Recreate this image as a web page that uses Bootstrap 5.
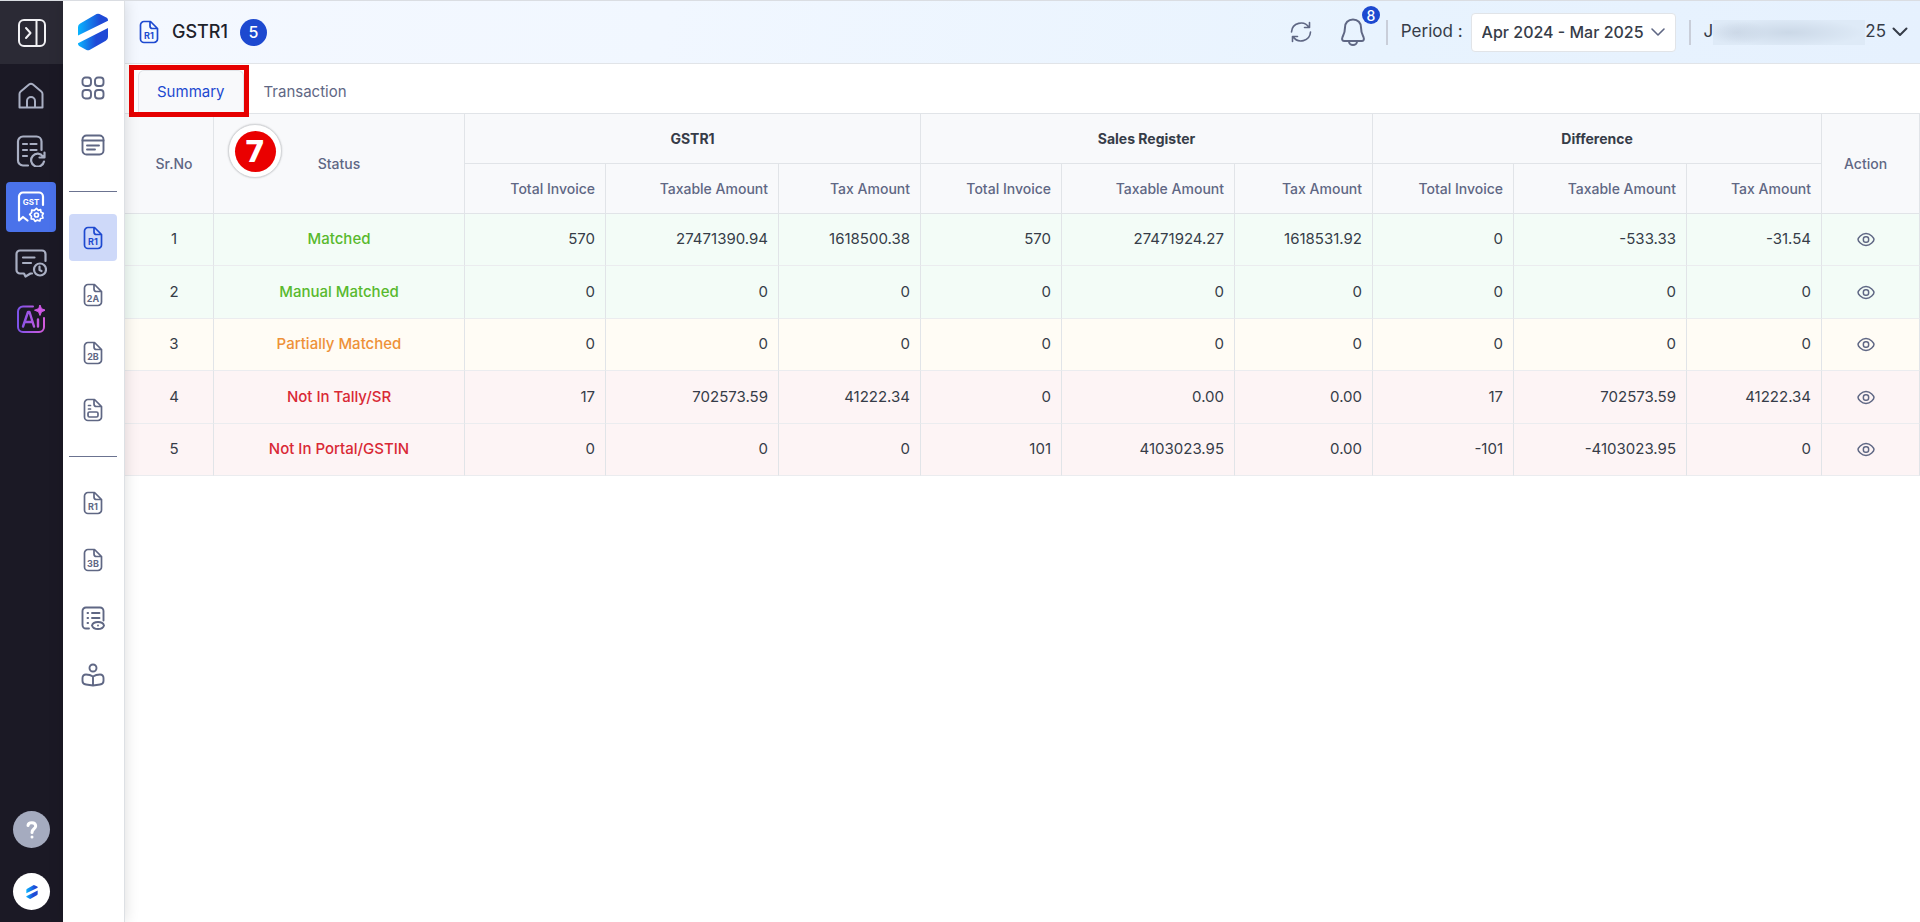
<!DOCTYPE html>
<html lang="en">
<head>
<meta charset="utf-8">
<meta name="viewport" content="width=device-width, initial-scale=1">
<title>GSTR1 Summary</title>
<link href="https://cdn.jsdelivr.net/npm/bootstrap@5.3.0/dist/css/bootstrap.min.css" rel="stylesheet">
<style>
  :root { --ink: #363c48; --muted-ink: #5f6784; --line: #e1e4e8; --brand: #1d49d0; }
  body { font-family: Inter, "Liberation Sans", sans-serif; font-size: 15px; color: var(--ink); border-top: 1px solid #dadde2; }
  svg { display: block; flex-shrink: 0; }
  .shell { min-height: calc(100vh - 1px); }
  .icon-line { fill: none; stroke: currentColor; stroke-linecap: round; stroke-linejoin: round; }
  .svg-label { font-weight: 700; fill: currentColor; stroke: none; text-anchor: middle; }

  /* Main rail */
  .rail { width: 63px; background: #1b1925; color: #a9afc3; }
  .rail-toggle { height: 63px; background: #2b2a35; color: #f1f1f4; }
  .rail-nav { gap: 6px; padding: 6px 1px 0 0; }
  .rail-item { width: 50px; height: 50px; border-radius: 4px; color: inherit; }
  .rail-item.active { background: #4a72ea; color: #fff; }
  .rail-round { width: 37px; height: 37px; }
  .rail-help { background: #a5abbf; }
  .rail-foot { gap: 25px; padding-bottom: 12px; }

  /* Product side menu */
  .side { width: 62px; padding-right: 1px; border-right: 1px solid #dde0e4; box-shadow: 0 0 14px rgba(0, 0, 0, .14); z-index: 2; color: var(--muted-ink); }
  .side-logo { height: 63px; padding-top: 12px; }
  .side-item { width: 48px; height: 47px; margin-bottom: 10px; border-radius: 4px; color: inherit; }
  .side-item:nth-child(even) { margin-bottom: 11px; }
  .side-item.active { background: #ced9f9; color: var(--brand); }
  .side-rule { width: 48px; height: 1px; margin: 12px 0 22px; background: #6b7390; }

  /* Top bar */
  .topbar { height: 63px; padding: 0 12px 0 14px; border-bottom: 1px solid var(--line); background: linear-gradient(100deg, #f4f8ff 0%, #f1f7ff 30%, #e8f3fe 70%, #e6f1fe 100%); }
  .page-title { font-size: 18px; font-weight: 500; color: #1e222b; margin: 0 12px 0 13px; }
  .count-dot { width: 27px; height: 27px; background: var(--brand); font-size: 16px; font-weight: 500; }
  .bar-rule { width: 2px; height: 25px; margin: 0 13px; background: #c9ced9; }
  .bell { margin-right: 7px; }
  .bell-badge { top: -12px; left: 22px; width: 18px; height: 18px; background: var(--brand); font-size: 14px; font-weight: 500; }
  .bar-text { font-size: 17px; color: var(--ink); }
  .period-box { width: 205px; height: 39px; padding: 0 30px 0 10px; font-size: 16px; font-weight: 500; color: var(--ink); border-color: var(--line); border-radius: 4px;
    background-position: right 9px center; background-size: 16px 16px;
    background-image: url("data:image/svg+xml,%3Csvg xmlns='http://www.w3.org/2000/svg' viewBox='0 0 16 16'%3E%3Cpath d='M2 5l6 6 6-6' fill='none' stroke='%235f6784' stroke-width='1.6' stroke-linecap='round' stroke-linejoin='round'/%3E%3C/svg%3E"); }
  .masked-name { width: 152px; height: 25px; background: radial-gradient(ellipse 75px 14px at 50% 50%, #cbd8e7, transparent), radial-gradient(ellipse 30px 12px at 16% 50%, #cdd9e8, transparent), #deeaf7; }
  .company-arrow { margin-left: 6px; }

  /* Tabs */
  .tabs { height: 50px; gap: 1px; padding: 6px 0 0 13px; border-bottom: 1px solid var(--line); }
  .tabs .nav-link { height: 43px; padding: 0 18px; border: 1px solid transparent; border-bottom: 0; border-radius: 6px 6px 0 0; color: var(--muted-ink); background: none; }
  .tabs .nav-link.active { color: var(--brand); background: #f8f9fb; border-color: var(--line); }
  .tab-mark { inset: -5px -5px -4px -9px; z-index: 1; border: 5px solid #e60000; pointer-events: none; }
  .step-mark { top: 10px; left: 14px; width: 54px; height: 54px; background: #fff; border: 1px solid #d5d7da; box-shadow: 0 0 2px rgba(0, 0, 0, .2); }
  .step-mark span { width: 41px; height: 41px; background: #ea0000; font: 700 30px "DejaVu Sans", sans-serif; }

  /* Summary table */
  .summary { table-layout: fixed; border-collapse: separate; border-spacing: 0; }
  .summary th, .summary td { padding: 0 10px; border: 0 solid var(--line); border-right-width: 1px; border-bottom-width: 1px; text-align: right; vertical-align: middle; color: var(--ink); }
  .summary thead th { background: #f8f9fb; font-size: 14px; font-weight: 500; color: var(--muted-ink); height: 50px; }
  .summary thead th.group { font-weight: 700; color: var(--ink); text-align: center; }
  .summary .mid { text-align: center; }
  .summary tr > .first { padding-left: 20px; }
  .summary tr > .last { padding-right: 20px; }
  .summary tbody tr { height: 52px; }
  .summary tbody tr:nth-child(even) { height: 53px; }
  .summary tbody td { border-bottom-color: #ebecef; }
  .row-green td { background: #f3fcf7; }
  .row-amber td { background: #fffcf5; }
  .row-red td { background: #fdf4f5; }
  .summary .row-green .state { color: #58b92e; }
  .summary .row-amber .state { color: #ee9138; }
  .summary .row-red .state { color: #d92935; }
  .summary .state { font-weight: 500; }
  .view-btn { color: var(--muted-ink); }
  .c-sr { width: 89px; } .c-state { width: 251px; } .c-inv { width: 141px; } .c-taxable { width: 173px; }
  .c-tax1 { width: 142px; } .c-tax2 { width: 138px; } .c-tax3 { width: 135px; } .c-action { width: 98px; }
</style>
</head>
<body>
<svg width="0" height="0" class="position-absolute" aria-hidden="true">
  <defs>
    <linearGradient id="logoTop" x1="0" y1="0" x2="1" y2="0"><stop offset="0" stop-color="#08b4ff"/><stop offset=".75" stop-color="#1f49d6"/></linearGradient>
    <linearGradient id="logoLow" x1="0" y1="0" x2="1" y2="0"><stop offset="0" stop-color="#08b4ff"/><stop offset=".6" stop-color="#1f49d6"/></linearGradient>
    <linearGradient id="aiTone" gradientUnits="userSpaceOnUse" x1="0" y1="14" x2="28" y2="14"><stop offset="0" stop-color="#7a52e8"/><stop offset="1" stop-color="#d45bdc"/></linearGradient>
    <symbol id="logo" viewBox="0 0 30 37">
      <path d="M0 22V13.500Q0 11 2.200 10L18.500 .6Q20 -.2 21.500 .6L28.800 4.200Q30 5 30 6.500V7.200Z" fill="url(#logoTop)"/>
      <path d="M30 14.500V23.500Q30 26 27.800 27.200L11.500 36.400Q10 37.200 8.500 36.400L1.200 32.500Q0 31.800 0 30.300V29.800Z" fill="url(#logoLow)"/>
    </symbol>
    <symbol id="doc" viewBox="0 0 20 24">
      <path class="icon-line" stroke-width="1.700" d="M11.500 1.500H5A3.500 3.500 0 0 0 1.500 5v14A3.500 3.500 0 0 0 5 22.500h10a3.500 3.500 0 0 0 3.500-3.500V8.500zM11 1.500V6a2.500 2.500 0 0 0 2.500 2.500h5"/>
    </symbol>
    <symbol id="eye" viewBox="0 0 20 16">
      <path class="icon-line" stroke-width="1.600" d="M1.500 8C1.500 6.500 5 1.700 10 1.700S18.500 6.500 18.500 8 15 14.300 10 14.300 1.500 9.500 1.500 8z"/>
      <rect class="icon-line" stroke-width="1.600" x="7.200" y="5" width="5.600" height="6" rx="2.400"/>
    </symbol>
  </defs>
</svg>

<div class="shell d-flex">
  <nav class="rail d-flex flex-column align-items-center flex-shrink-0" aria-label="Main">
    <button type="button" class="rail-toggle btn rounded-0 border-0 w-100 p-0 d-flex align-items-center justify-content-center" aria-label="Expand menu">
      <svg class="icon-line" width="28" height="28" viewBox="0 0 28 28" stroke-width="2"><rect x="1" y="1" width="26" height="26" rx="5"/><path d="M18.500 1v26M8 9l4.500 5L8 19"/></svg>
    </button>
    <div class="rail-nav d-flex flex-column">
      <a href="#" class="rail-item d-flex align-items-center justify-content-center" aria-label="Home">
        <svg class="icon-line" width="26" height="27" viewBox="0 0 26 27" stroke-width="2"><path d="M1.500 25.500V12q0-1.500 1.200-2.500L11 2.500q2-1.600 4 0l8.300 7q1.200 1 1.200 2.500v13.500zM9 25v-6a4 4 0 0 1 8 0v6"/></svg>
      </a>
      <a href="#" class="rail-item d-flex align-items-center justify-content-center" aria-label="Reconcile">
        <svg class="icon-line" width="30" height="32" viewBox="0 0 30 32" stroke-width="2.200"><path d="M12 30.500H7a5 5 0 0 1-5-5V6.500a5 5 0 0 1 5-5h13.500a5 5 0 0 1 5 5V15M7 9h4M14.500 9h6M7 15h4M14.500 15h6M7 21h4M27 21.500A6.500 6.500 0 1 0 28 26.500M28.500 17.500v5h-5"/></svg>
      </a>
      <a href="#" class="rail-item active d-flex align-items-center justify-content-center" aria-label="GST">
        <svg class="icon-line" width="28" height="32" viewBox="0 0 28 32" stroke-width="2.200"><path d="M26 14V5.500A4 4 0 0 0 22 1.500H6A4 4 0 0 0 2 5.500V29.500l4-3.500 4.500 3.500"/><text class="svg-label" x="14" y="14" font-size="8">GST</text><g stroke-width="1.700"><circle cx="19.500" cy="24" r="2"/><path d="M19.500 17.300l1.600 2 2.500-.6.400 2.500 2.300 1.100-1.100 2.200.8 2.400-2.500.6-.7 2.500-2.500-.9-2.200 1.300-1.300-2.200-2.600-.3.200-2.600-1.700-1.900 1.900-1.700.1-2.500 2.600.1z"/></g></svg>
      </a>
      <a href="#" class="rail-item d-flex align-items-center justify-content-center" aria-label="Messages">
        <svg class="icon-line" width="32" height="29" viewBox="0 0 32 29" stroke-width="2.200"><path d="M30.500 12V5a3.500 3.500 0 0 0-3.500-3.500H5A3.500 3.500 0 0 0 1.500 5v16A3.500 3.500 0 0 0 5 24.500h4l1.500 3 5-3H17M8 8.500h11.500M8 14h8"/><circle cx="25" cy="20.500" r="6"/><path d="M24.500 17.500v3.500l2 1"/></svg>
      </a>
      <a href="#" class="rail-item d-flex align-items-center justify-content-center" aria-label="AI assistant">
        <svg width="28" height="28" viewBox="0 0 28 28" fill="none" stroke="url(#aiTone)" stroke-width="2" stroke-linecap="round" stroke-linejoin="round"><path d="M16 1.500H6A5 5 0 0 0 1 6.500V22A5 5 0 0 0 6 27H22A5 5 0 0 0 27 22V13"/><path d="M6 21.500L11 7h1.500L17 21.500M8 17h7.500M21 14.500v7" stroke-width="2.400"/><path d="M23 0l1.500 3.700 4 1.500-4 1.500L23 10.500l-1.500-3.800-4-1.500 4-1.500z" fill="#cf58e6" stroke="#cf58e6" stroke-width="1"/></svg>
      </a>
    </div>
    <div class="rail-foot d-flex flex-column mt-auto">
      <button type="button" class="rail-round rail-help btn rounded-circle border-0 p-0 d-flex align-items-center justify-content-center text-white" aria-label="Help">
        <svg class="icon-line" width="12" height="18" viewBox="0 0 12 18" stroke-width="3"><path d="M2 4.500C2.300 1 9.500 .5 9.700 5 9.700 8 6 7.500 6 11.500M6 16v.1"/></svg>
      </button>
      <button type="button" class="rail-round btn bg-white rounded-circle border-0 p-0 d-flex align-items-center justify-content-center" aria-label="Account">
        <svg width="12" height="14"><use href="#logo"/></svg>
      </button>
    </div>
  </nav>

  <nav class="side bg-white position-relative d-flex flex-column align-items-center flex-shrink-0" aria-label="GST">
    <a href="#" class="side-logo" aria-label="Dashboard home"><svg width="30" height="38"><use href="#logo"/></svg></a>
    <div>
      <a href="#" class="side-item d-flex align-items-center justify-content-center" aria-label="Dashboard">
        <svg class="icon-line" width="24" height="24" viewBox="0 0 24 24" stroke-width="1.900"><rect x="1.500" y="1.500" width="8.500" height="8.500" rx="3"/><rect x="14" y="1.500" width="8.500" height="8.500" rx="3"/><rect x="1.500" y="14" width="8.500" height="8.500" rx="3"/><rect x="14" y="14" width="8.500" height="8.500" rx="3"/></svg>
      </a>
      <a href="#" class="side-item d-flex align-items-center justify-content-center" aria-label="Records">
        <svg class="icon-line" width="24" height="22" viewBox="0 0 24 22" stroke-width="1.900"><rect x="1.500" y="1.500" width="21" height="19" rx="4"/><path d="M1.500 6.500h21M6 11.500h12M6 15.500h8"/></svg>
      </a>
    </div>
    <div class="side-rule"></div>
    <div>
      <a href="#" class="side-item active d-flex align-items-center justify-content-center" aria-current="page">
        <svg width="20" height="24" viewBox="0 0 20 24"><use href="#doc"/><text class="svg-label" x="10" y="18.500" font-size="9">R1</text></svg>
      </a>
      <a href="#" class="side-item d-flex align-items-center justify-content-center">
        <svg width="20" height="24" viewBox="0 0 20 24"><use href="#doc"/><text class="svg-label" x="10" y="18.500" font-size="9">2A</text></svg>
      </a>
      <a href="#" class="side-item d-flex align-items-center justify-content-center">
        <svg width="20" height="24" viewBox="0 0 20 24"><use href="#doc"/><text class="svg-label" x="10" y="18.500" font-size="9">2B</text></svg>
      </a>
      <a href="#" class="side-item d-flex align-items-center justify-content-center" aria-label="Statement">
        <svg width="20" height="24" viewBox="0 0 20 24"><use href="#doc"/><path class="icon-line" stroke-width="1.700" d="M5.500 7.500h2M5.500 11h2M6.500 14h7a1.500 1.500 0 0 1 1.500 1.500v2a1.500 1.500 0 0 1-1.500 1.500h-7A1.500 1.500 0 0 1 5 17.500v-2A1.500 1.500 0 0 1 6.500 14z"/></svg>
      </a>
    </div>
    <div class="side-rule"></div>
    <div>
      <a href="#" class="side-item d-flex align-items-center justify-content-center">
        <svg width="20" height="24" viewBox="0 0 20 24"><use href="#doc"/><text class="svg-label" x="10" y="18.500" font-size="9">R1</text></svg>
      </a>
      <a href="#" class="side-item d-flex align-items-center justify-content-center">
        <svg width="20" height="24" viewBox="0 0 20 24"><use href="#doc"/><text class="svg-label" x="10" y="18.500" font-size="9">3B</text></svg>
      </a>
      <a href="#" class="side-item d-flex align-items-center justify-content-center" aria-label="Review list">
        <svg class="icon-line" width="24" height="24" viewBox="0 0 24 24" stroke-width="1.900"><path d="M8 22.500H5A3.500 3.500 0 0 1 1.500 19V5A3.500 3.500 0 0 1 5 1.500h14A3.500 3.500 0 0 1 22.500 5v9.500M6.500 7h.6M6.500 12h.6M6.500 17h.6M11 7h7.500M11 12h7.500M11 19.500q1-3.500 6-3.500t6 3.500q-1 3.500-6 3.500t-6-3.500zM17 19.500v.1"/></svg>
      </a>
      <a href="#" class="side-item d-flex align-items-center justify-content-center" aria-label="Guide">
        <svg class="icon-line" width="24" height="24" viewBox="0 0 24 24" stroke-width="1.900"><circle cx="12" cy="5" r="3.500"/><path d="M12 13.500v9M12 13.500q-3-2-7-2-3.500 0-3.500 3.500v3q0 3 3.500 3.500l7 1 7-1q3.500-.5 3.500-3.500v-3q0-3.500-3.500-3.500-4 0-7 2z"/></svg>
      </a>
    </div>
  </nav>

  <main class="flex-grow-1 overflow-hidden bg-white">
    <header class="topbar d-flex align-items-center">
      <svg width="20" height="24" viewBox="0 0 20 24" color="#1d49d0"><use href="#doc"/><text class="svg-label" x="10" y="18.500" font-size="9">R1</text></svg>
      <h1 class="page-title">GSTR1</h1>
      <span class="count-dot rounded-circle text-white d-flex align-items-center justify-content-center">5</span>

      <div class="d-flex align-items-center ms-auto">
        <button type="button" class="btn border-0 p-0 me-4" aria-label="Refresh">
          <svg class="icon-line" width="22" height="22" viewBox="0 0 22 22" stroke-width="1.600" color="#5f6784"><path d="M19 6.500A9.500 9.500 0 0 0 1.500 11M19.500 1.500v5h-5M3 15.500A9.500 9.500 0 0 0 20.500 11M2.500 20.500v-5h5"/></svg>
        </button>
        <button type="button" class="bell btn border-0 p-0 position-relative ms-1" aria-label="Notifications">
          <svg class="icon-line" width="26" height="28" viewBox="0 0 26 28" stroke-width="2" color="#5f6784"><path d="M13 1.500C8 1.500 5 5 5 9.500c0 5-1 6.500-2.500 9.500-1 2.500 0 4 2 4h17c2 0 3-1.500 2-4C22 16 21 14.500 21 9.500 21 5 18 1.500 13 1.500zM9 23.500a4 3.500 0 0 0 8 0"/></svg>
          <span class="bell-badge position-absolute rounded-circle text-white d-flex align-items-center justify-content-center">8</span>
        </button>
        <span class="bar-rule"></span>
        <label for="period" class="bar-text me-2 text-nowrap">Period :</label>
        <select id="period" class="period-box form-select"><option>Apr 2024 - Mar 2025</option></select>
        <span class="bar-rule"></span>
        <button type="button" class="bar-text btn border-0 p-0 d-flex align-items-center" aria-label="Company">
          <span>J</span><span class="masked-name"></span><span>25</span>
          <svg class="company-arrow icon-line" width="16" height="10" viewBox="0 0 16 10" stroke-width="2"><path d="M1.500 1.500L8 8l6.500-6.500"/></svg>
        </button>
      </div>
    </header>

    <div class="tabs nav" role="tablist">
      <div class="position-relative">
        <button type="button" class="nav-link active" role="tab" aria-selected="true">Summary</button>
        <span class="tab-mark position-absolute"></span>
      </div>
      <button type="button" class="nav-link" role="tab" aria-selected="false">Transaction</button>
    </div>

    <table class="summary table mb-0 w-100">
      <colgroup>
        <col class="c-sr"><col class="c-state">
        <col class="c-inv"><col class="c-taxable"><col class="c-tax1">
        <col class="c-inv"><col class="c-taxable"><col class="c-tax2">
        <col class="c-inv"><col class="c-taxable"><col class="c-tax3">
        <col class="c-action">
      </colgroup>
      <thead>
        <tr>
          <th rowspan="2" class="mid first">Sr.No</th>
          <th rowspan="2" class="mid position-relative">Status
            <div class="step-mark position-absolute rounded-circle d-flex align-items-center justify-content-center"><span class="rounded-circle text-white d-flex align-items-center justify-content-center">7</span></div>
          </th>
          <th colspan="3" class="group">GSTR1</th>
          <th colspan="3" class="group">Sales Register</th>
          <th colspan="3" class="group">Difference</th>
          <th rowspan="2" class="mid last">Action</th>
        </tr>
        <tr>
          <th>Total Invoice</th><th>Taxable Amount</th><th>Tax Amount</th>
          <th>Total Invoice</th><th>Taxable Amount</th><th>Tax Amount</th>
          <th>Total Invoice</th><th>Taxable Amount</th><th>Tax Amount</th>
        </tr>
      </thead>
      <tbody>
        <tr class="row-green"><td class="mid first">1</td><td class="mid state">Matched</td><td>570</td><td>27471390.94</td><td>1618500.38</td><td>570</td><td>27471924.27</td><td>1618531.92</td><td>0</td><td>-533.33</td><td>-31.54</td><td class="last"><button type="button" class="view-btn btn border-0 p-0 d-block mx-auto" aria-label="View"><svg width="20" height="15"><use href="#eye"/></svg></button></td></tr>
        <tr class="row-green"><td class="mid first">2</td><td class="mid state">Manual Matched</td><td>0</td><td>0</td><td>0</td><td>0</td><td>0</td><td>0</td><td>0</td><td>0</td><td>0</td><td class="last"><button type="button" class="view-btn btn border-0 p-0 d-block mx-auto" aria-label="View"><svg width="20" height="15"><use href="#eye"/></svg></button></td></tr>
        <tr class="row-amber"><td class="mid first">3</td><td class="mid state">Partially Matched</td><td>0</td><td>0</td><td>0</td><td>0</td><td>0</td><td>0</td><td>0</td><td>0</td><td>0</td><td class="last"><button type="button" class="view-btn btn border-0 p-0 d-block mx-auto" aria-label="View"><svg width="20" height="15"><use href="#eye"/></svg></button></td></tr>
        <tr class="row-red"><td class="mid first">4</td><td class="mid state">Not In Tally/SR</td><td>17</td><td>702573.59</td><td>41222.34</td><td>0</td><td>0.00</td><td>0.00</td><td>17</td><td>702573.59</td><td>41222.34</td><td class="last"><button type="button" class="view-btn btn border-0 p-0 d-block mx-auto" aria-label="View"><svg width="20" height="15"><use href="#eye"/></svg></button></td></tr>
        <tr class="row-red"><td class="mid first">5</td><td class="mid state">Not In Portal/GSTIN</td><td>0</td><td>0</td><td>0</td><td>101</td><td>4103023.95</td><td>0.00</td><td>-101</td><td>-4103023.95</td><td>0</td><td class="last"><button type="button" class="view-btn btn border-0 p-0 d-block mx-auto" aria-label="View"><svg width="20" height="15"><use href="#eye"/></svg></button></td></tr>
      </tbody>
    </table>
  </main>
</div>
<script src="https://cdn.jsdelivr.net/npm/bootstrap@5.3.0/dist/js/bootstrap.bundle.min.js"></script>
</body>
</html>
